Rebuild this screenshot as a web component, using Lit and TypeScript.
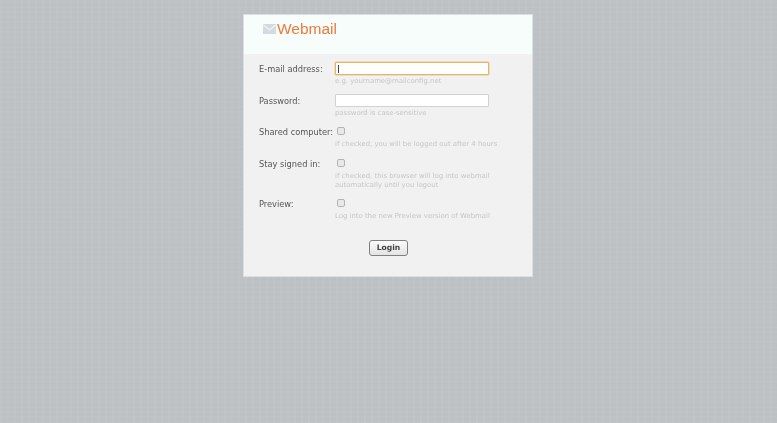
import {LitElement, html, css} from 'lit';
import {customElement} from 'lit/decorators.js';

type Row = {
    label: string;
    type: 'email' | 'password' | 'checkbox';
    hint: string[];
};

const ROWS: Row[] = [
    {label: 'E-mail address:', type: 'email', hint: ['e.g. yourname@mailconfig.net']},
    {label: 'Password:', type: 'password', hint: ['password is case-sensitive']},
    {label: 'Shared computer:', type: 'checkbox', hint: ['if checked, you will be logged out after 4 hours']},
    {
        label: 'Stay signed in:',
        type: 'checkbox',
        hint: ['if checked, this browser will log into webmail', 'automatically until you logout'],
    },
    {label: 'Preview:', type: 'checkbox', hint: ['Log into the new Preview version of Webmail']},
];

@customElement('app-root')
export class AppRoot extends LitElement {
    static override styles = css`
        :host {
            display: block;
            height: 423px;
            overflow: hidden;
            background-color: #bfc3c6;
            background-image:
                repeating-linear-gradient(90deg, rgba(255, 255, 255, 0.014) 0 2px, rgba(0, 0, 0, 0.008) 2px 7px),
                repeating-linear-gradient(0deg, rgba(255, 255, 255, 0.01) 0 2px, rgba(0, 0, 0, 0.005) 2px 5px);
            font-family: 'DejaVu Sans', sans-serif;
        }

        .page {
            display: flex;
            justify-content: center;
            padding: 14px 1px 0 0;
        }

        .card {
            width: 290px;
            height: 263px;
            box-sizing: border-box;
            background: #f1f1f1;
            border: 1px solid #dcdfe0;
            filter: blur(0.45px);
        }

        .header {
            height: 39px;
            box-sizing: border-box;
            padding: 4px 0 0 19px;
            background: #f7fdfb;
            display: flex;
            align-items: flex-start;
            gap: 1px;
        }

        .header svg {
            margin-top: 5px;
        }

        .logo {
            font-family: 'Liberation Sans', sans-serif;
            font-size: 15.5px;
            line-height: 20px;
            color: #ee7a3c;
        }

        .form {
            padding: 8px 0 0 15px;
        }

        .row {
            display: grid;
            grid-template-columns: 76px 154px;
            margin-bottom: 7.5px;
        }

        .label {
            font-size: 8.25px;
            line-height: 12px;
            color: #555;
            padding-top: 1px;
            white-space: nowrap;
        }

        .slot {
            display: flex;
            height: 13px;
        }

        .input {
            width: 154px;
            height: 13px;
            box-sizing: border-box;
            background: #fff;
            border: 1px solid #d2d2d2;
            border-radius: 1px;
        }

        .input.focus {
            border-color: #e6b468;
            box-shadow: 0 0 0 0.5px #eec88e;
            padding: 2px 0 0 2px;
        }

        .caret {
            display: block;
            width: 1px;
            height: 8px;
            background: #444;
        }

        .check {
            width: 8px;
            height: 8px;
            box-sizing: border-box;
            margin: 2px 0 0 2px;
            background: #e8e8e8;
            border: 1px solid #b4b4b4;
            border-radius: 2px;
        }

        .hint {
            font-size: 6.9px;
            line-height: 9px;
            color: #c6c6c6;
            margin-top: 2px;
            white-space: nowrap;
        }

        .actions {
            display: flex;
            justify-content: center;
            margin-top: 18.5px;
            padding-right: 14px;
        }

        button {
            width: 39px;
            height: 16px;
            padding: 0;
            box-sizing: border-box;
            border: 1px solid #7f7f7f;
            border-radius: 3px;
            background: linear-gradient(#fbfbfb, #e4e4e4);
            font-family: 'DejaVu Sans', sans-serif;
            font-size: 7.6px;
            font-weight: 700;
            color: #444;
        }
    `;

    private _renderField(row: Row, index: number) {
        if (row.type === 'checkbox') {
            return html`<span class="check"></span>`;
        }
        return html`<div class="input ${index === 0 ? 'focus' : ''}">
            ${index === 0 ? html`<span class="caret"></span>` : ''}
        </div>`;
    }

    override render() {
        return html`
            <div class="page">
                <div class="card">
                    <div class="header">
                        <svg width="13" height="10" viewBox="0 0 13 10">
                            <rect x="0" y="0" width="13" height="10" fill="#d3dbe1" />
                            <path d="M0.5 1 L6.5 6 L12.5 1" fill="none" stroke="#f0f3f5" stroke-width="1.2" />
                        </svg>
                        <span class="logo">Webmail</span>
                    </div>
                    <div class="form">
                        ${ROWS.map(
                            (row, i) => html`
                                <div class="row">
                                    <div class="label">${row.label}</div>
                                    <div>
                                        <div class="slot">${this._renderField(row, i)}</div>
                                        <div class="hint">
                                            ${row.hint.map((line) => html`<div>${line}</div>`)}
                                        </div>
                                    </div>
                                </div>
                            `
                        )}
                        <div class="actions"><button>Login</button></div>
                    </div>
                </div>
            </div>
        `;
    }
}
